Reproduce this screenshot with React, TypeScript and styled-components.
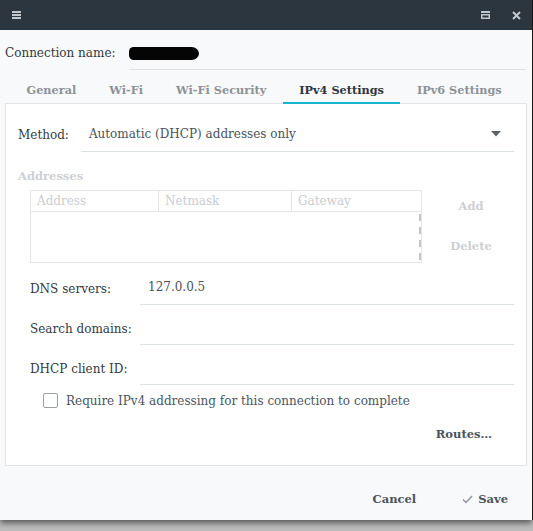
import React from "react";
import styled, { createGlobalStyle } from "styled-components";

const Global = createGlobalStyle`
  html, body { margin: 0; padding: 0; }
  body {
    background: #bdbdbd;
    font-family: "DejaVu Serif", "Liberation Serif", serif;
    font-size: 12px;
    color: #333a40;
    width: 533px;
    height: 531px;
    overflow: hidden;
  }
`;

const Window = styled.div`
  width: 532px;
  height: 520px;
  background: #f7f9fa;
  display: flex;
  flex-direction: column;
  box-shadow: 1px 0 0 #161616, 0 3px 6px rgba(0, 0, 0, 0.55);
`;

const TitleBar = styled.div`
  height: 30px;
  background: #2b363f;
  display: flex;
  align-items: center;
  padding: 0 11px 0 12px;
  gap: 22px;
`;

const TitleSpacer = styled.div`
  flex: 1;
`;

const Body = styled.div`
  flex: 1;
  display: flex;
  flex-direction: column;
  padding: 0 5px;
`;

const NameRow = styled.div`
  display: flex;
  align-items: center;
  height: 38px;
  margin-top: 4px;
  padding-right: 1px;
`;

const Label = styled.span`
  color: #333a40;
  white-space: nowrap;
`;

const Entry = styled.div<{ $left: number }>`
  flex: 1;
  margin-left: ${(p) => p.$left}px;
  height: 33px;
  border-bottom: 1px solid #dfe2e5;
  display: flex;
  align-items: center;
  padding-left: 8px;
  color: #4a5158;
`;

const Blob = styled.div`
  width: 70px;
  height: 13px;
  border-radius: 5px 8px 8px 5px / 5px 7px 7px 5px;
  background: #050505;
  filter: blur(0.6px);
  margin-left: -8px;
  margin-top: 1px;
`;

const TabRow = styled.div`
  display: flex;
  padding-left: 5px;
  margin-top: 4px;
  position: relative;
  z-index: 1;
`;

const Tab = styled.div<{ $active?: boolean }>`
  flex-shrink: 0;
  white-space: nowrap;
  height: 28px;
  padding: 0 16.5px;
  display: flex;
  align-items: center;
  font-weight: bold;
  font-size: 11.3px;
  color: ${(p) => (p.$active ? "#2f363c" : "#8e9296")};
  box-shadow: ${(p) => (p.$active ? "inset 0 -2px 0 #16b6cb" : "none")};
`;

const Panel = styled.div`
  margin-top: -1px;
  height: 361px;
  background: #ffffff;
  border: 1px solid #e1e4e6;
  display: flex;
  flex-direction: column;
  padding: 0 12px 0 12px;
`;

const MethodRow = styled.div`
  display: flex;
  align-items: flex-end;
  height: 48px;
`;

const MethodLabel = styled.span`
  color: #333a40;
  padding-bottom: 10px;
`;

const Combo = styled.div`
  flex: 1;
  margin-left: 12px;
  height: 34px;
  border-bottom: 1px solid #dfe2e5;
  display: flex;
  align-items: center;
  padding: 0 13px 0 8px;
  color: #4a5158;
`;

const ComboText = styled.span`
  flex: 1;
`;

const SectionTitle = styled.div`
  margin-top: 17px;
  font-weight: bold;
  font-size: 11.5px;
  color: #cdd0d3;
`;

const AddrBlock = styled.div`
  display: flex;
  margin-top: 7px;
  padding-left: 12px;
`;

const Table = styled.div`
  width: 392px;
  height: 73px;
  border: 1px solid #e3e5e7;
  display: flex;
  flex-direction: column;
  box-sizing: border-box;
`;

const TableHead = styled.div`
  display: grid;
  grid-template-columns: 128px 133px 1fr;
  height: 20px;
  border-bottom: 1px solid #e3e5e7;
`;

const HeadCell = styled.div<{ $last?: boolean }>`
  display: flex;
  align-items: center;
  padding-left: 6px;
  color: #c9ccd0;
  border-right: ${(p) => (p.$last ? "none" : "1px solid #e3e5e7")};
`;

const TableBody = styled.div`
  flex: 1;
  display: flex;
  justify-content: flex-end;
`;

const ScrollDash = styled.div`
  width: 2px;
  margin: 2px 0 2px 0;
  background: repeating-linear-gradient(
    to bottom,
    #c2c4c6 0 7px,
    transparent 7px 13px
  );
`;

const SideButtons = styled.div`
  flex: 1;
  display: flex;
  flex-direction: column;
  align-items: center;
  padding-top: 9px;
  padding-left: 6px;
  gap: 26px;
`;

const GhostButton = styled.div`
  font-weight: bold;
  font-size: 11.5px;
  color: #cdd0d3;
  height: 14px;
`;

const FieldList = styled.div`
  display: flex;
  flex-direction: column;
  padding-left: 12px;
  margin-top: 2px;
`;

const FieldRow = styled.div`
  display: flex;
  align-items: flex-end;
  height: 40px;
`;

const FieldLabel = styled.span`
  width: 110px;
  padding-bottom: 9px;
  color: #333a40;
  white-space: nowrap;
`;

const FieldEntry = styled.div`
  flex: 1;
  height: 34px;
  border-bottom: 1px solid #dfe2e5;
  display: flex;
  align-items: center;
  padding-left: 8px;
  color: #4a5158;
`;

const CheckRow = styled.label`
  display: flex;
  align-items: center;
  gap: 8px;
  margin-top: 8px;
  padding-left: 25px;
  color: #4a5560;
`;

const CheckBox = styled.span`
  width: 13px;
  height: 13px;
  border: 1px solid #9aa0a6;
  border-radius: 2px;
  background: #fff;
`;

const RoutesRow = styled.div`
  display: flex;
  justify-content: flex-end;
  padding-right: 22px;
  margin-top: 19px;
`;

const BoldButton = styled.div`
  font-weight: bold;
  font-size: 11.5px;
  color: #4b545c;
  display: flex;
  align-items: center;
  gap: 5px;
`;

const Footer = styled.div`
  flex: 1;
  display: flex;
  justify-content: flex-end;
  align-items: center;
  gap: 46px;
  padding-right: 19px;
  padding-top: 12px;
`;

const Hamburger = () => (
  <svg width="9" height="8" viewBox="0 0 9 8">
    <rect x="0" y="0" width="9" height="2" fill="#c3c8cc" />
    <rect x="0" y="3" width="9" height="2" fill="#c3c8cc" />
    <rect x="0" y="6" width="9" height="2" fill="#c3c8cc" />
  </svg>
);

const RestoreIcon = () => (
  <svg width="9" height="8" viewBox="0 0 9 8">
    <rect x="0" y="0" width="9" height="2" fill="#c3c8cc" />
    <rect x="0.75" y="3.75" width="7.5" height="3.5" fill="none" stroke="#c3c8cc" strokeWidth="1.5" />
  </svg>
);

const CloseIcon = () => (
  <svg width="9" height="9" viewBox="0 0 9 9">
    <path d="M1 1 L8 8 M8 1 L1 8" stroke="#c3c8cc" strokeWidth="2" />
  </svg>
);

const Arrow = () => (
  <svg width="10" height="6" viewBox="0 0 10 6">
    <path d="M0 0 H10 L5 5.5 Z" fill="#5b6166" />
  </svg>
);

const Check = () => (
  <svg width="11" height="9" viewBox="0 0 11 9">
    <path d="M1 4.5 L4 7.5 L10 1" fill="none" stroke="#8b9197" strokeWidth="1.3" />
  </svg>
);

export default function App() {
  return (
    <>
      <Global />
      <Window>
        <TitleBar>
          <Hamburger />
          <TitleSpacer />
          <RestoreIcon />
          <CloseIcon />
        </TitleBar>
        <Body>
          <NameRow>
            <Label>Connection name:</Label>
            <Entry $left={13}>
              <Blob />
            </Entry>
          </NameRow>
          <TabRow>
            <Tab>General</Tab>
            <Tab>Wi-Fi</Tab>
            <Tab>Wi-Fi Security</Tab>
            <Tab $active>IPv4 Settings</Tab>
            <Tab>IPv6 Settings</Tab>
          </TabRow>
          <Panel>
            <MethodRow>
              <MethodLabel>Method:</MethodLabel>
              <Combo>
                <ComboText>Automatic (DHCP) addresses only</ComboText>
                <Arrow />
              </Combo>
            </MethodRow>
            <SectionTitle>Addresses</SectionTitle>
            <AddrBlock>
              <Table>
                <TableHead>
                  <HeadCell>Address</HeadCell>
                  <HeadCell>Netmask</HeadCell>
                  <HeadCell $last>Gateway</HeadCell>
                </TableHead>
                <TableBody>
                  <ScrollDash />
                </TableBody>
              </Table>
              <SideButtons>
                <GhostButton>Add</GhostButton>
                <GhostButton>Delete</GhostButton>
              </SideButtons>
            </AddrBlock>
            <FieldList>
              <FieldRow>
                <FieldLabel>DNS servers:</FieldLabel>
                <FieldEntry>127.0.0.5</FieldEntry>
              </FieldRow>
              <FieldRow>
                <FieldLabel>Search domains:</FieldLabel>
                <FieldEntry />
              </FieldRow>
              <FieldRow>
                <FieldLabel>DHCP client ID:</FieldLabel>
                <FieldEntry />
              </FieldRow>
            </FieldList>
            <CheckRow>
              <CheckBox />
              Require IPv4 addressing for this connection to complete
            </CheckRow>
            <RoutesRow>
              <BoldButton>Routes…</BoldButton>
            </RoutesRow>
          </Panel>
          <Footer>
            <BoldButton>Cancel</BoldButton>
            <BoldButton>
              <Check />
              Save
            </BoldButton>
          </Footer>
        </Body>
      </Window>
    </>
  );
}
